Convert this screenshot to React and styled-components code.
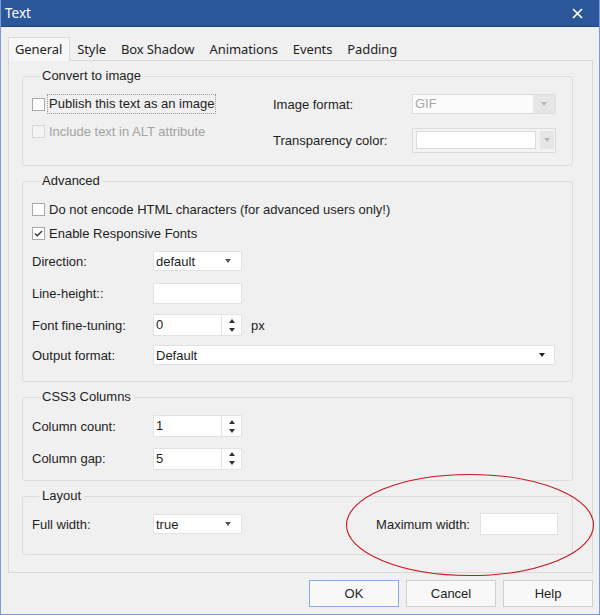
import React from "react";
import styled, { createGlobalStyle } from "styled-components";

const GlobalStyle = createGlobalStyle`
  html, body {
    margin: 0;
    padding: 0;
    background: #f0f0f0;
  }
  * {
    box-sizing: border-box;
  }
`;

export default function App() {
  return (
    <>
      <GlobalStyle />
      <Window>
        <TitleBar>
          <Title>Text</Title>
          <CloseIcon width="11" height="11" viewBox="0 0 11 11">
            <path d="M1 1 L10 10 M10 1 L1 10" stroke="#fff" strokeWidth="1.7" />
          </CloseIcon>
        </TitleBar>

        <Body>
          <TabStrip>
            <Tab $active>General</Tab>
            <Tab>Style</Tab>
            <Tab>Box Shadow</Tab>
            <Tab>Animations</Tab>
            <Tab>Events</Tab>
            <Tab>Padding</Tab>
          </TabStrip>

          <Panel>
            <Group $pad="10px 14px 12px 9px">
              <Legend>Convert to image</Legend>
              <ConvertRow>
                <LeftColumn>
                  <CheckRow>
                    <CheckBox />
                    <FocusLabel>Publish this text as an image</FocusLabel>
                  </CheckRow>
                  <CheckRow>
                    <CheckBox $disabled />
                    <Label $disabled>Include text in ALT attribute</Label>
                  </CheckRow>
                </LeftColumn>
                <RightGrid>
                  <Label>Image format:</Label>
                  <DisabledSelect>
                    <DisabledValue>GIF</DisabledValue>
                    <ArrowBox $w={22}>
                      <Arrow $color="#b5b5b5" />
                    </ArrowBox>
                  </DisabledSelect>
                  <Label>Transparency color:</Label>
                  <ColorPicker>
                    <ColorSwatch />
                    <ArrowBox $w={14}>
                      <Arrow $color="#b5b5b5" />
                    </ArrowBox>
                  </ColorPicker>
                </RightGrid>
              </ConvertRow>
            </Group>

            <Group $pad="8px 14px 12px 9px">
              <Legend>Advanced</Legend>
              <CheckRow $h={24}>
                <CheckBox />
                <Label>Do not encode HTML characters (for advanced users only!)</Label>
              </CheckRow>
              <CheckRow $h={24}>
                <CheckBox>
                  <svg width="11" height="11" viewBox="0 0 11 11">
                    <path d="M2 5.5 L4.3 7.8 L9 3" fill="none" stroke="#333" strokeWidth="1.4" />
                  </svg>
                </CheckBox>
                <Label>Enable Responsive Fonts</Label>
              </CheckRow>
              <FieldRow $h={32}>
                <Label>Direction:</Label>
                <Select $w={89}>
                  <span>default</span>
                  <Arrow $color="#555" />
                </Select>
              </FieldRow>
              <FieldRow $h={32}>
                <Label>Line-height::</Label>
                <TextBox $w={89} $h={21} />
              </FieldRow>
              <FieldRow $h={32}>
                <Label>Font fine-tuning:</Label>
                <Inline>
                  <Spinner value="0" />
                  <Label>px</Label>
                </Inline>
              </FieldRow>
              <FieldRow $h={28}>
                <Label>Output format:</Label>
                <Select $w={402} $arrowRight={9}>
                  <span>Default</span>
                  <Arrow $color="#222" />
                </Select>
              </FieldRow>
            </Group>

            <Group $pad="5px 14px 5px 9px">
              <Legend>CSS3 Columns</Legend>
              <FieldRow $h={32}>
                <Label>Column count:</Label>
                <Spinner value="1" />
              </FieldRow>
              <FieldRow $h={33}>
                <Label>Column gap:</Label>
                <Spinner value="5" />
              </FieldRow>
            </Group>

            <Group $pad="4px 14px 14px 9px">
              <Legend>Layout</Legend>
              <LayoutRow>
                <FieldRow $h={32}>
                  <Label>Full width:</Label>
                  <Select $w={89}>
                    <span>true</span>
                    <Arrow $color="#555" />
                  </Select>
                </FieldRow>
                <Inline $gap={10}>
                  <Label>Maximum width:</Label>
                  <TextBox $w={78} $h={22} />
                </Inline>
              </LayoutRow>
            </Group>
          </Panel>

          <ButtonRow>
            <Button $default>OK</Button>
            <Button>Cancel</Button>
            <Button>Help</Button>
          </ButtonRow>
        </Body>

        <Highlight width="250" height="104" viewBox="0 0 250 104">
          <ellipse cx="125" cy="52" rx="123.5" ry="50.5" fill="none" stroke="#c8161b" strokeWidth="1.1" />
        </Highlight>
      </Window>
    </>
  );
}

function Spinner({ value }) {
  return (
    <SpinBox>
      <SpinValue>{value}</SpinValue>
      <SpinButtons>
        <Arrow $color="#333" $up />
        <Arrow $color="#333" />
      </SpinButtons>
    </SpinBox>
  );
}

const Window = styled.div`
  position: relative;
  width: 600px;
  height: 615px;
  display: flex;
  flex-direction: column;
  background: #f0f0f0;
  border: 1px solid #7c9ad6;
  border-top: none;
  overflow: hidden;
  font-family: "Liberation Sans", Arial, sans-serif;
  font-size: 13px;
  color: #1e1e1e;
`;

const TitleBar = styled.div`
  height: 27px;
  margin: 0 -1px;
  padding: 0 17px 0 5px;
  display: flex;
  align-items: center;
  justify-content: space-between;
  background: #2b579a;
  border-bottom: 1px solid #1b4283;
`;

const Title = styled.div`
  font-family: "Noto Sans", sans-serif;
  font-size: 13.5px;
  color: #fff;
  margin-top: -1px;
`;

const CloseIcon = styled.svg`
  display: block;
`;

const Body = styled.div`
  flex: 1;
  display: flex;
  flex-direction: column;
  padding: 10px 6px 0 7px;
`;

const TabStrip = styled.div`
  display: flex;
  height: 23px;
  position: relative;
  z-index: 1;
`;

const Tab = styled.div`
  height: ${(p) => (p.$active ? "24px" : "23px")};
  padding: 0 7px 0 6px;
  line-height: 22px;
  font-family: "Noto Sans", sans-serif;
  font-size: 13px;
  letter-spacing: -0.1px;
  color: #1e1e1e;
  background: ${(p) => (p.$active ? "#f7f7f7" : "transparent")};
  border: 1px solid ${(p) => (p.$active ? "#d9d9d9" : "transparent")};
  border-bottom: none;
`;

const Panel = styled.div`
  display: flex;
  flex-direction: column;
  gap: 7px;
  padding: 7px 19px 17px 13px;
  border: 1px solid #d9d9d9;
`;

const Group = styled.fieldset`
  margin: 0;
  min-width: 0;
  padding: ${(p) => p.$pad};
  border: 1px solid #dcdcdc;
  border-radius: 3px;
`;

const Legend = styled.legend`
  margin-left: 7px;
  padding: 0 3px;
  line-height: 16px;
  font-size: 13px;
  color: #1e1e1e;
`;

const ConvertRow = styled.div`
  display: flex;
`;

const LeftColumn = styled.div`
  width: 241px;
  display: flex;
  flex-direction: column;
  gap: 7px;
`;

const RightGrid = styled.div`
  display: grid;
  grid-template-columns: 139px 143px;
  grid-template-rows: 20px 25px;
  row-gap: 14px;
  align-items: center;
`;

const CheckRow = styled.div`
  height: ${(p) => p.$h || 20}px;
  display: flex;
  align-items: center;
  gap: 4px;
`;

const CheckBox = styled.div`
  width: 13px;
  height: 13px;
  flex: none;
  display: flex;
  align-items: center;
  justify-content: center;
  background: ${(p) => (p.$disabled ? "#f4f4f4" : "#fff")};
  border: 1px solid ${(p) => (p.$disabled ? "#d6d6d6" : "#a9a9a9")};
`;

const Label = styled.span`
  white-space: nowrap;
  color: ${(p) => (p.$disabled ? "#a3a3a3" : "#1e1e1e")};
`;

const FocusLabel = styled.span`
  white-space: nowrap;
  padding: 1px 1px 2px 1px;
  margin-left: -1px;
  outline: 1px dotted #9a9a9a;
`;

const FieldRow = styled.div`
  height: ${(p) => p.$h}px;
  display: grid;
  grid-template-columns: 121px auto;
  align-items: center;
  justify-content: start;
`;

const Inline = styled.div`
  display: flex;
  align-items: center;
  gap: ${(p) => p.$gap || 9}px;
`;

const LayoutRow = styled.div`
  display: flex;
  align-items: center;
  justify-content: space-between;
`;

const Select = styled.div`
  width: ${(p) => p.$w}px;
  height: 20px;
  display: flex;
  align-items: center;
  justify-content: space-between;
  padding: 0 ${(p) => p.$arrowRight || 10}px 0 2px;
  background: #fff;
  border: 1px solid #e2e2e2;
`;

const TextBox = styled.div`
  width: ${(p) => p.$w}px;
  height: ${(p) => p.$h}px;
  background: #fff;
  border: 1px solid #e2e2e2;
`;

const Arrow = styled.span`
  width: 0;
  height: 0;
  border-left: 3.5px solid transparent;
  border-right: 3.5px solid transparent;
  border-top: ${(p) => (p.$up ? "none" : `4px solid ${p.$color}`)};
  border-bottom: ${(p) => (p.$up ? `4px solid ${p.$color}` : "none")};
`;

const DisabledSelect = styled.div`
  width: 144px;
  height: 20px;
  display: flex;
  align-items: stretch;
  background: #fbfbfb;
  border: 1px solid #dedede;
`;

const DisabledValue = styled.span`
  flex: 1;
  padding-left: 2px;
  line-height: 18px;
  color: #a6a6a6;
`;

const ArrowBox = styled.div`
  width: ${(p) => p.$w}px;
  display: flex;
  align-items: center;
  justify-content: center;
  background: #e6e6e6;
`;

const ColorPicker = styled.div`
  width: 144px;
  height: 25px;
  display: flex;
  gap: 4px;
  padding: 2px 1px 3px 3px;
  background: #f3f3f3;
  border: 1px solid #dadada;
`;

const ColorSwatch = styled.div`
  flex: 1;
  background: #fff;
  border: 1px solid #dcdcdc;
`;

const SpinBox = styled.div`
  width: 89px;
  height: 22px;
  display: flex;
  background: #fff;
  border: 1px solid #e2e2e2;
`;

const SpinValue = styled.span`
  width: 68px;
  padding: 1px 0 0 2px;
  line-height: 18px;
  border-right: 1px solid #e2e2e2;
`;

const SpinButtons = styled.div`
  flex: 1;
  display: flex;
  flex-direction: column;
  align-items: center;
  justify-content: center;
  gap: 5px;
`;

const ButtonRow = styled.div`
  display: flex;
  justify-content: flex-end;
  gap: 7px;
  margin-top: 7px;
`;

const Button = styled.div`
  width: 90px;
  height: 27px;
  display: flex;
  align-items: center;
  justify-content: center;
  background: #f8f8f8;
  border: 1px solid ${(p) => (p.$default ? "#86aee3" : "#d0d0d0")};
  color: #1e1e1e;
`;

const Highlight = styled.svg`
  position: absolute;
  left: 344px;
  top: 473px;
  pointer-events: none;
`;
